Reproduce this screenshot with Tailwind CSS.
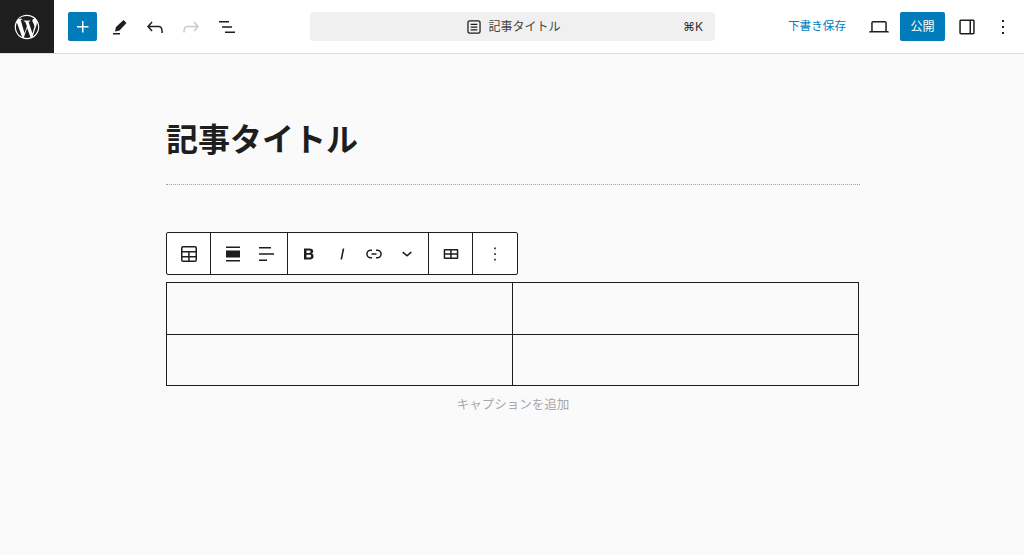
<!DOCTYPE html>
<html lang="ja">
<head>
  <meta charset="UTF-8" />
  <title>記事タイトル</title>
  <script src="https://cdn.jsdelivr.net/npm/@tailwindcss/browser@4"></script>
</head>
<body class="bg-[#fafafa] text-[#1e1e1e] font-['Inter','Noto_Sans_CJK_JP',sans-serif] overflow-hidden">
  <div class="w-[1024px] h-[555px] flex flex-col">
    <!-- top bar -->
    <header class="h-[54px] shrink-0 bg-white border-b border-[#dedede] flex items-center">
      <div class="w-[54px] h-[53px] bg-[#1e1e1e] flex items-center justify-center">
        <svg width="28" height="28" viewBox="0 0 24 24" fill="#fff"><path d="M12 1.500C6.200 1.500 1.500 6.200 1.500 12S6.200 22.500 12 22.500 22.500 17.800 22.500 12 17.800 1.500 12 1.500zm0 1c2.500 0 4.700 1 6.400 2.500h-.2c-1 0-1.600.8-1.600 1.700 0 .8.500 1.400 1 2.200.3.600.700 1.400.700 2.500 0 .8-.3 1.700-.7 3l-.9 3.100-3.400-10.100c.6 0 1.100-.1 1.100-.1.500-.1.500-.8 0-.8 0 0-1.500.1-2.500.1-.9 0-2.400-.1-2.400-.1-.5 0-.6.800 0 .8 0 0 .5.100 1 .1l1.400 3.900-2 6.100L6.600 5.900c.6 0 1.100-.1 1.100-.1.500-.1.500-.8 0-.8 0 0-1.500.1-2.400.1h-.5C6.500 3.600 9.100 2.500 12 2.500zM2.500 12c0-1.400.3-2.700.8-3.900l4.500 12.400C4.700 19 2.500 15.700 2.500 12zm9.600.800 2.900 7.900v.1c-1 .4-2 .6-3 .6-.9 0-1.800-.1-2.700-.4l2.800-8.200zm7.900-5.200c.9 1.300 1.500 2.800 1.500 4.400 0 3.500-1.900 6.600-4.700 8.200l2.900-8.400c.5-1.300.7-2.400.7-3.300 0-.3 0-.6-.1-.9z"/></svg>
      </div>
      <div class="flex items-center ml-[14px]">
        <button class="w-[29px] h-[29px] bg-[#007cba] rounded-[2px] flex items-center justify-center">
          <svg width="24" height="24" viewBox="0 0 24 24" fill="#fff"><path d="M11 12.500V17.500H12.500V12.500H17.500V11H12.500V6H11V11H6V12.500H11Z"/></svg>
        </button>
        <span class="ml-[10px] w-[24px] flex justify-center">
          <svg width="24" height="24" viewBox="0 0 24 24" fill="#1e1e1e"><path d="M16.500 5 19.500 8 12.500 15.500 8 16.500 9 12z"/><path d="M6 18h7v1.500H6z"/></svg>
        </span>
        <span class="ml-[12px] w-[24px] flex justify-center">
          <svg width="24" height="24" viewBox="0 0 24 24" fill="#1e1e1e"><path d="M18.300 11.700c-.600-.600-1.400-.900-2.300-.900H6.700l2.900-3.300-1.100-1-4.500 5L8.500 16.500l1.100-1-2.900-3.300H16c.5 0 .9.200 1.300.500 1 1 1 3.400 1 4.500v.8h1.500V17c0-1.400 0-3.900-1.500-5.300z"/></svg>
        </span>
        <span class="ml-[12px] w-[24px] flex justify-center">
          <svg width="24" height="24" viewBox="0 0 24 24" fill="#c9c9c9"><path d="M15.600 6.500l-1.100 1 2.900 3.300H8c-.9 0-1.700.3-2.300.9-1.400 1.500-1.400 4.200-1.400 5.600v.2h1.500v-.3c0-1.100 0-3.500 1-4.500.3-.3.700-.5 1.300-.5h9.200L14.500 15.500l1.100 1 4.500-5-4.500-5z"/></svg>
        </span>
        <span class="ml-[12px] w-[24px] flex justify-center">
          <svg width="24" height="24" viewBox="0 0 24 24" fill="#1e1e1e"><path d="M4 6h10v1.500H4V6zm3 5.300h10v1.500H7v-1.500zM10 16.500h10V18H10v-1.500z"/></svg>
        </span>
      </div>
      <div class="ml-[71px] w-[405px] h-[29px] bg-[#f0f0f0] rounded-[4px] flex items-center relative text-[12px] text-[#1e1e1e]">
        <div class="mx-auto flex items-center gap-[4px] text-[#444]">
          <svg width="20" height="20" viewBox="0 0 24 24" fill="#1e1e1e"><path d="M7 4h10a3 3 0 0 1 3 3v10a3 3 0 0 1-3 3H7a3 3 0 0 1-3-3V7a3 3 0 0 1 3-3zm0 1.500A1.500 1.500 0 0 0 5.500 7v10A1.500 1.500 0 0 0 7 18.500h10a1.500 1.500 0 0 0 1.500-1.500V7A1.500 1.500 0 0 0 17 5.500H7zM8 8h8v1.500H8V8zm0 3.300h8v1.500H8v-1.500zm0 3.300h8v1.500H8v-1.500z"/></svg>
          <span>記事タイトル</span>
        </div>
        <span class="absolute right-[12px] text-[12px] text-[#333]">⌘K</span>
      </div>
      <div class="flex items-center ml-auto">
        <span class="text-[11.600px] text-[#007cba]">下書き保存</span>
        <span class="ml-[21px] w-[24px] flex justify-center">
          <svg width="24" height="24" viewBox="0 0 24 24" fill="#1e1e1e"><path d="M20.500 16h-.7V8c0-1.100-.9-2-2-2H6.200c-1.100 0-2 .9-2 2v8h-.7c-.8 0-1.500.7-1.500 1.500h20c0-.8-.7-1.500-1.500-1.500zM5.700 8c0-.3.2-.5.500-.5h11.600c.3 0 .5.200.5.500v8H5.700V8z"/></svg>
        </span>
        <button class="ml-[9px] w-[45px] h-[29px] bg-[#007cba] rounded-[2px] text-[12px] text-white">公開</button>
        <span class="ml-[10px] w-[24px] flex justify-center">
          <svg width="24" height="24" viewBox="0 0 24 24" fill="#1e1e1e"><path d="M18 4.500H6c-1 0-1.700.7-1.700 1.700v11.600c0 1 .7 1.700 1.700 1.700h12c1 0 1.700-.7 1.700-1.700V6.200c0-1-.7-1.700-1.700-1.700zM5.800 17.800V6.200c0-.1.100-.2.200-.2h8.500v12H6c-.1 0-.2-.1-.2-.2zm12.400 0c0 .1-.1.200-.2.200h-2V6h2c.1 0 .2.100.2.200v11.600z"/></svg>
        </span>
        <span class="ml-[12px] mr-[9px] w-[24px] flex justify-center">
          <svg width="24" height="24" viewBox="0 0 24 24" fill="#1e1e1e"><path d="M13 19h-2v-2h2v2zm0-6h-2v-2h2v2zm0-6h-2V5h2v2z"/></svg>
        </span>
      </div>
    </header>

    <!-- editor canvas -->
    <main class="w-[694px] ml-[166px] flex flex-col">
      <h1 class="mt-[64px] text-[32px] leading-[44px] font-bold text-[#1e1e1e]">記事タイトル</h1>
      <div class="mt-[22px] border-t border-dotted border-[#a0a0a0]"></div>

      <!-- block toolbar -->
      <div class="mt-[47px] w-[352px] h-[43px] bg-white border border-[#1e1e1e] rounded-[2px] flex items-center">
        <div class="w-[44px] h-full flex items-center justify-center border-r border-[#1e1e1e]">
          <svg width="24" height="24" viewBox="0 0 24 24" fill="#1e1e1e"><path d="M6 4h12a2 2 0 0 1 2 2v12a2 2 0 0 1-2 2H6a2 2 0 0 1-2-2V6a2 2 0 0 1 2-2zm0 1.500a.5.500 0 0 0-.5.500v3h13V6a.5.500 0 0 0-.5-.5H6zm-.5 5V14h5.700v-3.500H5.500zm7.200 0V14h5.800v-3.500h-5.800zm-7.200 5V18a.5.500 0 0 0 .5.500h5.200v-3H5.500zm7.200 0v3H18a.5.500 0 0 0 .5-.5v-2.500h-5.800z"/></svg>
        </div>
        <div class="w-[77px] h-full flex items-center justify-center gap-[9px] border-r border-[#1e1e1e]">
          <svg width="24" height="24" viewBox="0 0 24 24" fill="#1e1e1e"><path d="M5 4.500h14V6H5V4.500zm0 4h14v7H5v-7zM5 18h14v1.500H5V18z"/></svg>
          <svg width="24" height="24" viewBox="0 0 24 24" fill="#1e1e1e"><path d="M5 5h12v1.500H5V5zm0 6.300h15v1.500H5v-1.500zM5 17.500h8V19H5v-1.500z"/></svg>
        </div>
        <div class="w-[141px] h-full flex items-center justify-center gap-[8.500px] border-r border-[#1e1e1e]">
          <svg width="24" height="24" viewBox="0 0 24 24" fill="#1e1e1e" fill-rule="evenodd"><path d="M7 6.500h5.500c2.300 0 3.700 1 3.700 2.800 0 1.200-.7 2-1.700 2.300 1.300.3 2.100 1.200 2.100 2.600 0 2-1.500 3.300-3.900 3.300H7zM9.500 8.500v2.400h2.500c1 0 1.600-.4 1.600-1.200s-.6-1.200-1.600-1.200zM9.500 12.800v2.700h2.900c1.100 0 1.700-.5 1.700-1.350s-.6-1.350-1.700-1.350z"/></svg>
          <svg width="24" height="24" viewBox="0 0 24 24" fill="#1e1e1e"><path d="M12.700 6.500 10.500 17.500h1.600L14.300 6.500z"/></svg>
          <svg width="24" height="24" viewBox="0 0 24 24" fill="#1e1e1e"><path d="M10 16.500H8.700a4.500 4.500 0 1 1 0-9H10V9H8.700a3 3 0 0 0 0 6H10v1.500zM14 7.500h1.300a4.500 4.500 0 0 1 0 9H14V15h1.300a3 3 0 0 0 0-6H14V7.500zm-4.500 5.300h5v-1.500h-5v1.500z"/></svg>
          <svg width="24" height="24" viewBox="0 0 24 24" fill="#1e1e1e"><path d="M16.800 10.700 12 14.800l-4.800-4.100 1-1.100L12 12.800l3.800-3.200z"/></svg>
        </div>
        <div class="w-[44px] h-full flex items-center justify-center border-r border-[#1e1e1e]">
          <svg width="24" height="24" viewBox="0 0 24 24" fill="#1e1e1e" fill-rule="evenodd"><path d="M5.500 7h13a.8.8 0 0 1 .8.800v8.400a.8.8 0 0 1-.8.800h-13a.8.8 0 0 1-.8-.8V7.800A.8.8 0 0 1 5.500 7zm.7 1.500v2.700h5V8.500h-5zm6.500 0v2.700h5.100V8.500h-5.100zm-6.500 4.200v2.800h5v-2.800h-5zm6.500 0v2.800h5.100v-2.800h-5.100z"/></svg>
        </div>
        <div class="flex-1 h-full flex items-center justify-center">
          <svg width="24" height="24" viewBox="0 0 24 24" fill="#1e1e1e"><path d="M12.800 18.500h-1.600v-1.700h1.600v1.700zm0-5.600h-1.600v-1.700h1.600v1.700zm0-5.700h-1.600V5.500h1.600v1.700z"/></svg>
        </div>
      </div>

      <!-- table block -->
      <table class="mt-[7px] w-[693px] h-[104px] table-fixed border-collapse">
        <tbody>
          <tr><td class="border border-[#1e1e1e]"></td><td class="border border-[#1e1e1e]"></td></tr>
          <tr><td class="border border-[#1e1e1e]"></td><td class="border border-[#1e1e1e]"></td></tr>
        </tbody>
      </table>
      <p class="mt-[10px] text-center text-[12.500px] leading-[18px] text-[#a8a8a8]">キャプションを追加</p>
    </main>
  </div>
</body>
</html>
